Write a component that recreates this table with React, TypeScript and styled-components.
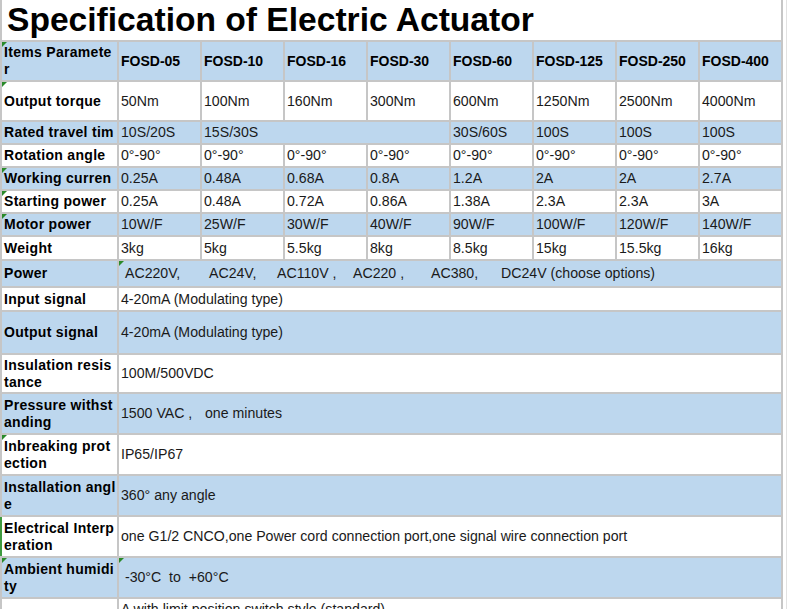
import React from 'react';
import styled, { createGlobalStyle, css } from 'styled-components';

const GlobalStyle = createGlobalStyle`
  html, body { margin: 0; padding: 0; background: #ffffff; overflow: hidden; }
  body { font-family: "Liberation Sans", Arial, Helvetica, sans-serif; }
`;

type Tone = 'blue' | 'white';

const Page = styled.div`
  width: 786px;
  height: 609px;
  border-right: 1px solid #e2e2e2;
  overflow: hidden;
`;

const Sheet = styled.div`
  display: flex;
  flex-direction: column;
  gap: 2px;
  width: 779px;
  padding: 0 2px;
  background: #c6c6c6;
`;

const Row = styled.div<{ $h: number }>`
  display: grid;
  grid-template-columns: 115px repeat(8, 81px);
  column-gap: 2px;
  height: ${(p) => p.$h}px;
`;

const Cell = styled.div<{
  $tone: Tone;
  $span?: number;
  $flag?: boolean;
  $edge?: boolean;
  $top?: boolean;
}>`
  position: relative;
  display: flex;
  align-items: ${(p) => (p.$top ? 'flex-start' : 'center')};
  padding: ${(p) => (p.$top ? '2px 2px 0' : '0 2px')};
  background: ${(p) => (p.$tone === 'blue' ? '#bdd7ee' : '#ffffff')};
  grid-column: span ${(p) => p.$span ?? 1};
  overflow: hidden;
  white-space: pre;
  font-size: 14.15px;
  line-height: 17px;
  color: #1a1a1a;
  ${(p) =>
    p.$flag &&
    css`
      &::before {
        content: '';
        position: absolute;
        left: 0;
        top: 0;
        width: 0;
        height: 0;
        border-top: 5px solid #2a8a2a;
        border-right: 5px solid transparent;
      }
    `}
  ${(p) =>
    p.$edge &&
    css`
      box-shadow: -2px 0 0 #3f9a3f;
    `}
`;

const Label = styled(Cell)`
  font-size: 14px;
  font-weight: 700;
  color: #000000;
  letter-spacing: 0.3px;
`;

const Head = styled(Cell)`
  font-size: 14px;
  font-weight: 700;
  color: #000000;
`;

const Title = styled(Cell)`
  font-size: 33.6px;
  line-height: 40px;
  font-weight: 700;
  color: #000000;
  padding-left: 5px;
`;

const Chunk = styled.span<{ $w?: number; $lead?: number }>`
  display: inline-block;
  width: ${(p) => (p.$w ? `${p.$w}px` : 'auto')};
  margin-left: ${(p) => p.$lead ?? 0}px;
`;

const models = ['FOSD-05', 'FOSD-10', 'FOSD-16', 'FOSD-30', 'FOSD-60', 'FOSD-125', 'FOSD-250', 'FOSD-400'];

type GridRow = { label: string; h: number; tone: Tone; flag?: boolean; values: string[] };

const gridRows: GridRow[] = [
  { label: 'Rotation angle', h: 21, tone: 'white', values: Array(8).fill('0°-90°') },
  { label: 'Working curren', h: 21, tone: 'blue', flag: true, values: ['0.25A', '0.48A', '0.68A', '0.8A', '1.2A', '2A', '2A', '2.7A'] },
  { label: 'Starting power', h: 21, tone: 'white', flag: true, values: ['0.25A', '0.48A', '0.72A', '0.86A', '1.38A', '2.3A', '2.3A', '3A'] },
  { label: 'Motor power', h: 21, tone: 'blue', flag: true, values: ['10W/F', '25W/F', '30W/F', '40W/F', '90W/F', '100W/F', '120W/F', '140W/F'] },
  { label: 'Weight', h: 22, tone: 'white', values: ['3kg', '5kg', '5.5kg', '8kg', '8.5kg', '15kg', '15.5kg', '16kg'] },
];

type WideRow = { label: string; h: number; tone: Tone; flag?: boolean; edge?: boolean; dataFlag?: boolean; content: React.ReactNode };

const wideRows: WideRow[] = [
  { label: 'Input signal', h: 22, tone: 'white', content: '4-20mA (Modulating type)' },
  { label: 'Output signal', h: 41, tone: 'blue', content: '4-20mA (Modulating type)' },
  { label: 'Insulation resis\ntance', h: 37, tone: 'white', content: '100M/500VDC' },
  {
    label: 'Pressure withst\nanding',
    h: 39,
    tone: 'blue',
    content: (
      <>
        <Chunk $w={84}>1500 VAC ,</Chunk>
        <Chunk>one minutes</Chunk>
      </>
    ),
  },
  { label: 'Inbreaking prot\nection', h: 39, tone: 'white', flag: true, content: 'IP65/IP67' },
  { label: 'Installation angl\ne', h: 39, tone: 'blue', content: '360° any angle' },
  {
    label: 'Electrical Interp\neration',
    h: 39,
    tone: 'white',
    edge: true,
    content: 'one G1/2 CNCO,one Power cord connection port,one signal wire connection port',
  },
  { label: 'Ambient humidi\nty', h: 39, tone: 'blue', flag: true, dataFlag: true, content: ' -30°C  to  +60°C' },
];

export default function App() {
  return (
    <>
      <GlobalStyle />
      <Page>
        <Sheet>
          <Row $h={40}>
            <Title $tone="white" $span={9}>Specification of Electric Actuator</Title>
          </Row>

          <Row $h={38}>
            <Label $tone="blue" $flag>{'Items Paramete\nr'}</Label>
            {models.map((m) => (
              <Head key={m} $tone="blue">{m}</Head>
            ))}
          </Row>

          <Row $h={38}>
            <Label $tone="white" $flag>Output torque</Label>
            {['50Nm', '100Nm', '160Nm', '300Nm', '600Nm', '1250Nm', '2500Nm', '4000Nm'].map((v) => (
              <Cell key={v} $tone="white">{v}</Cell>
            ))}
          </Row>

          <Row $h={21}>
            <Label $tone="blue">Rated travel tim</Label>
            <Cell $tone="blue">10S/20S</Cell>
            <Cell $tone="blue" $span={3}>15S/30S</Cell>
            <Cell $tone="blue">30S/60S</Cell>
            <Cell $tone="blue">100S</Cell>
            <Cell $tone="blue">100S</Cell>
            <Cell $tone="blue">100S</Cell>
          </Row>

          {gridRows.map((r) => (
            <Row key={r.label} $h={r.h}>
              <Label $tone={r.tone} $flag={r.flag}>{r.label}</Label>
              {r.values.map((v, i) => (
                <Cell key={i} $tone={r.tone}>{v}</Cell>
              ))}
            </Row>
          ))}

          <Row $h={25}>
            <Label $tone="blue">Power</Label>
            <Cell $tone="blue" $span={8} $flag>
              <Chunk $lead={4} $w={84}>AC220V,</Chunk>
              <Chunk $w={68}>AC24V,</Chunk>
              <Chunk $w={76}>AC110V ,</Chunk>
              <Chunk $w={78}>AC220 ,</Chunk>
              <Chunk $w={70}>AC380,</Chunk>
              <Chunk>DC24V (choose options)</Chunk>
            </Cell>
          </Row>

          {wideRows.map((r) => (
            <Row key={r.label} $h={r.h}>
              <Label $tone={r.tone} $flag={r.flag} $edge={r.edge}>{r.label}</Label>
              <Cell $tone={r.tone} $span={8} $flag={r.dataFlag}>{r.content}</Cell>
            </Row>
          ))}

          <Row $h={40}>
            <Label $tone="white" $top>{''}</Label>
            <Cell $tone="white" $span={8} $top>A with limit position switch style (standard)</Cell>
          </Row>
        </Sheet>
      </Page>
    </>
  );
}
